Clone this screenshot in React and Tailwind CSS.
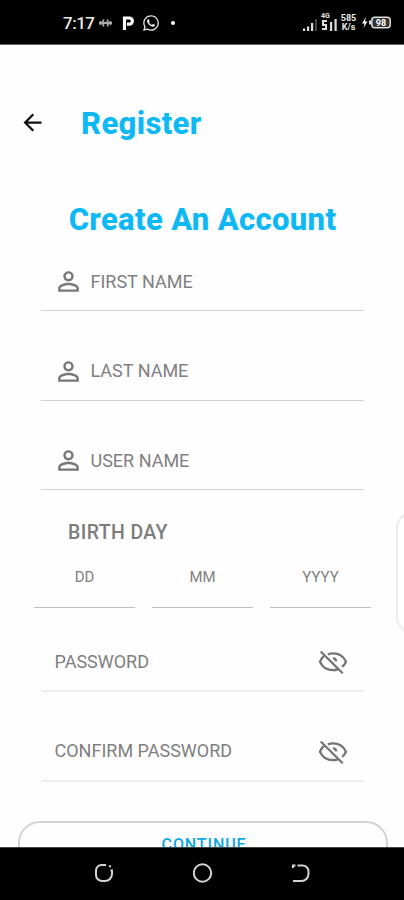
import React from 'react';
import { MdArrowBack, MdOutlinePersonOutline } from 'react-icons/md';
import { FaWhatsapp } from 'react-icons/fa';

const StatusBar = () => (
  <div className="h-[45px] shrink-0 bg-black text-[#e8e8e8] flex items-center justify-between pl-[63px] pr-[13px] pt-px border-b border-[#666]">
    <div className="flex items-center">
      <span className="mt-[2px] w-[32px] text-[17px] leading-none font-medium tracking-[-0.5px] whitespace-nowrap">7:17</span>
      <svg className="ml-[4px]" width="13" height="10" viewBox="0 0 13 10" fill="none" stroke="#aaa" strokeWidth="1.8">
        <path d="M1.500 3v4M4.300 1.500v7M8.700 1.500v7M11.500 3v4M0 5h13" />
      </svg>
      <svg className="ml-[10px]" width="13" height="14" viewBox="0 0 13 14" fill="none" stroke="#fff" strokeWidth="3.2">
        <path d="M2.500 14V2h4.800a3 3 0 0 1 0 6.200H5" />
      </svg>
      <FaWhatsapp className="ml-[7px]" size={18} />
      <span className="ml-[11px] w-[4px] h-[4px] rounded-full bg-white" />
    </div>
    <div className="flex items-center">
      {/* 신호 세기 */}
      <svg className="mt-1" width="15" height="12" viewBox="0 0 15 12">
        <path d="M0 9.500h2.200V12H0zM4 7.500h2.200V12H4zM8 4h2.200v8H8z" fill="#ddd" />
        <path d="M12 0h2v12h-2z" fill="#444" />
      </svg>
      <div className="ml-[3px] flex flex-col items-start">
        <span className="h-[5px] text-[7px] leading-[5px] font-bold">4G</span>
        <svg width="17" height="12" viewBox="0 0 17 12" fill="#ddd">
          <path d="M1 1h5v2H3v2h3v6H1V9h3V7H1zM9 3h2.200v9H9zM13.500 0h2.200v12h-2.200z" />
        </svg>
      </div>
      <div className="ml-[3px] w-[15px] flex flex-col items-center text-[9px] leading-[9px] font-bold">
        <span>585</span>
        <span>K/s</span>
      </div>
      <svg className="ml-[6px]" width="29" height="13" viewBox="0 0 29 13">
        <path d="M4 1L0 7.500h2.500L1.500 12 5.500 5.500H3z" fill="#fff" />
        <path d="M7 4.500h2v4H7z" fill="#ddd" />
        <rect x="9.800" y="1.300" width="18.400" height="10.400" rx="3" fill="#333" stroke="#ddd" strokeWidth="1.500" />
        <text x="19" y="9.700" textAnchor="middle" fontSize="9" fontWeight="700" fill="#fff">98</text>
      </svg>
    </div>
  </div>
);

const NavBar = () => (
  <div className="h-[53px] shrink-0 bg-black flex items-center justify-between pl-[94px] pr-[93px] pb-[2px] border-t border-[#444]">
    <svg width="20" height="20" viewBox="0 0 20 20" fill="none" stroke="#d4d4d4" strokeWidth="2">
      <path d="M12 2H7.500a5.500 5.500 0 0 0-5.500 5.500V12a6 6 0 0 0 6 6h3a7 7 0 0 0 7-7V7.500h-1.500" />
      <path d="M15 3.300h2" />
    </svg>
    <svg width="20" height="20" viewBox="0 0 20 20" fill="none" stroke="#d4d4d4" strokeWidth="2">
      <circle cx="9.500" cy="10" r="8.700" />
    </svg>
    <svg width="20" height="20" viewBox="0 0 20 20" fill="none" stroke="#d4d4d4" strokeWidth="2">
      <path d="M2 5V2.500h2.500M6.500 2.500h5a6 6 0 0 1 6 6v2.500a7 7 0 0 1-7 7H2" />
    </svg>
  </div>
);

const EyeOff = () => (
  <svg className="mt-[2px]" width="30" height="24" viewBox="0 0 30 24" fill="none" stroke="#757575" strokeWidth="2.3">
    <path d="M2.700 1.500l22 21.700" />
    <path d="M9.800 4.300C11.400 3.700 13.100 3.300 15 3.300c6.200 0 10.800 3.400 13 8.400-.9 2.100-2.200 3.800-3.900 5.200" />
    <path d="M6 5.900C4.200 7.400 2.900 9.500 2 11.700c2.200 5 6.800 8.500 13 8.500 1.700 0 3.300-.3 4.800-.8" />
    <path d="M15 8.200c1.800.2 3 1.400 3.200 3.100" />
  </svg>
);

const NameField = ({ label }) => (
  <div className="h-[60px] flex items-center pl-[12px] border-b border-[#d2d2d2]">
    <MdOutlinePersonOutline className="mt-[2px]" size={31} color="#777" />
    <span className="ml-[6.5px] mt-px text-[18px] text-[#808080]">{label}</span>
  </div>
);

const PasswordField = ({ label }) => (
  <div className="h-[60px] flex items-center justify-between pl-[13.5px] pr-4 border-b-2 border-[#ededed]">
    <span className="text-[18px] text-[#808080]">{label}</span>
    <EyeOff />
  </div>
);

const DateField = ({ label }) => (
  <div className="w-[101px] h-[61px] flex items-center justify-center border-b border-[#c0c0c0] text-[15px] text-[#808080]">
    {label}
  </div>
);

const App = () => {
  return (
    <div className="relative w-[404px] h-[900px] flex flex-col overflow-hidden bg-[#fefefe] font-['Roboto',sans-serif]">
      <StatusBar />

      <main className="flex-1 min-h-0 overflow-hidden">
        <header className="mt-[57px] h-10 flex items-center pl-[19px]">
          <MdArrowBack size={27} color="#111" />
          <h1 className="mt-[3px] ml-[35px] text-[31px] leading-10 font-extrabold tracking-[0.35px] text-[#0cb8f5]">Register</h1>
        </header>

        <h2 className="mt-[58px] h-10 pl-px text-center text-[31px] leading-10 font-extrabold tracking-[0.35px] text-[#0cb8f5]">Create An Account</h2>

        <div className="mt-[11px] ml-[41px] w-[323px] flex flex-col gap-[29.5px]">
          <NameField label="FIRST NAME" />
          <NameField label="LAST NAME" />
          <NameField label="USER NAME" />
        </div>

        <p className="mt-[29px] ml-[68px] h-7 text-[19.5px] leading-7 font-medium tracking-[0.4px] text-[#7c7c7c]">BIRTH DAY</p>
        <div className="ml-[34px] flex gap-[17px]">
          <DateField label="DD" />
          <DateField label="MM" />
          <DateField label="YYYY" />
        </div>

        <div className="mt-6 ml-[41px] w-[323px] flex flex-col gap-[29.5px]">
          <PasswordField label="PASSWORD" />
          <PasswordField label="CONFIRM PASSWORD" />
        </div>

        <button className="mt-[39.5px] ml-[18px] w-[370px] h-12 rounded-[22px] border-2 border-[#d3d3d3] pl-[2px] text-[16px] font-medium tracking-[0.9px] text-[#0ca8e0]">
          CONTINUE
        </button>
      </main>

      <NavBar />

      {/* 화면 오른쪽 엣지 패널 */}
      <div className="absolute left-[396px] top-[512px] w-10 h-[121px] rounded-[16px] border-2 border-[#ececec] bg-white" />
    </div>
  );
};

export default App;
